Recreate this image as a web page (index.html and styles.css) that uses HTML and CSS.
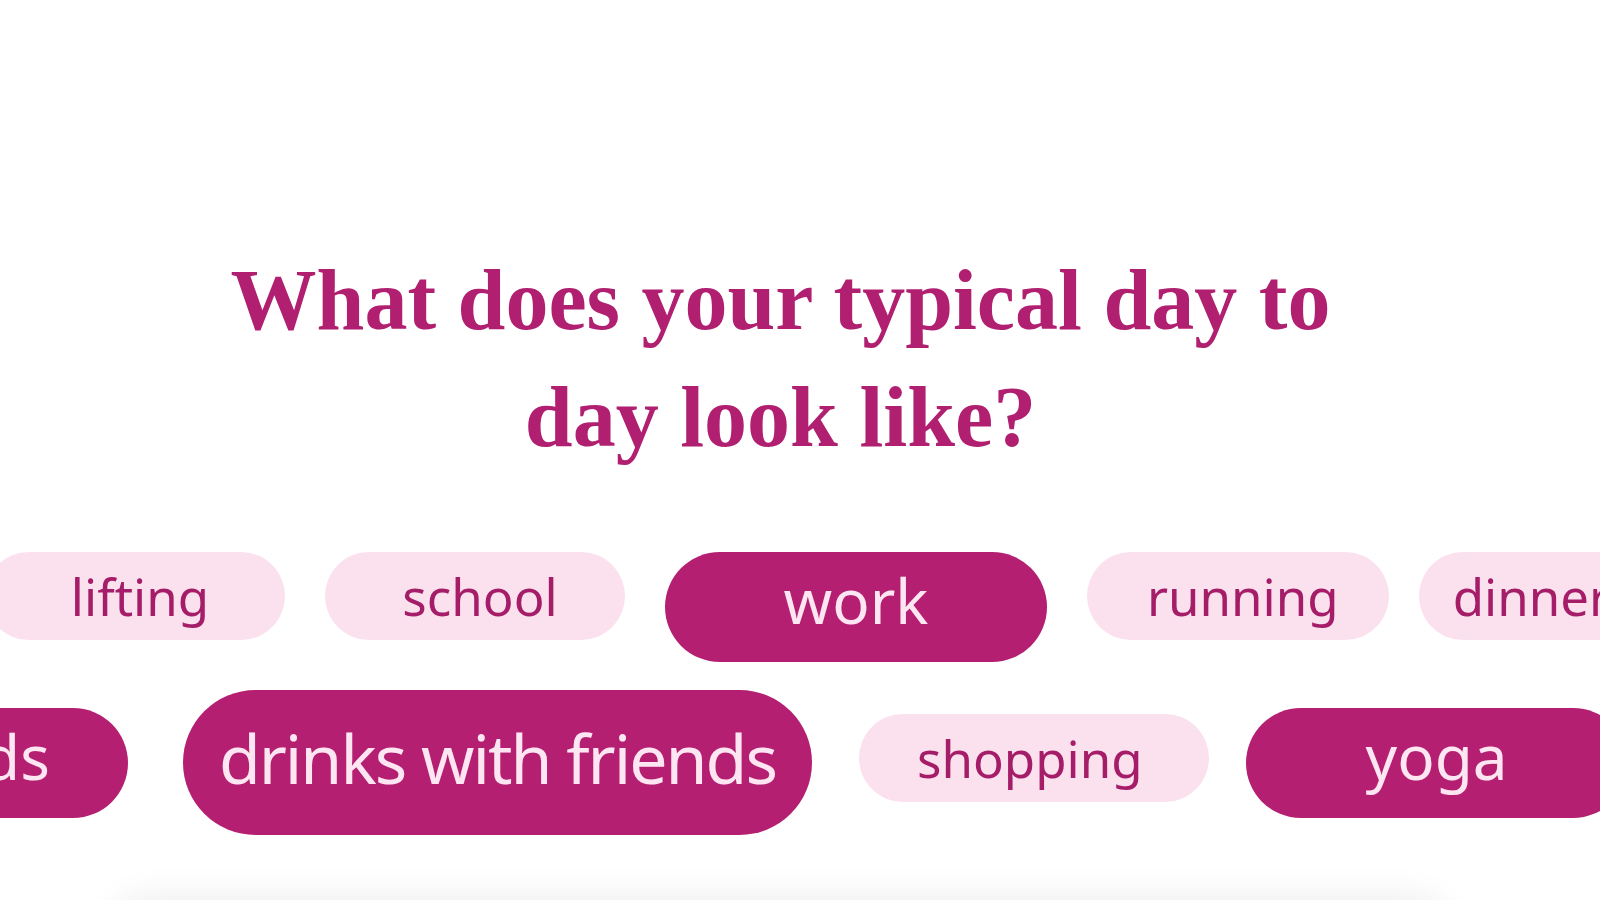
FILE: index.html
```html
<!DOCTYPE html>
<html lang="en">
<head>
<meta charset="utf-8">
<title>Your typical day</title>
<link rel="stylesheet" href="styles.css">
</head>
<body>
<main class="page">
  <section class="hero">
    <h1 class="title">What does your typical day to<br>day look like?</h1>
    <div class="tags">
      <div class="tag-row tag-row--top">
        <span class="tag">lifting</span>
        <span class="tag">school</span>
        <span class="tag tag--active">work</span>
        <span class="tag">running</span>
        <span class="tag tag--near tag--tight">dinner dates</span>
      </div>
      <div class="tag-row tag-row--bottom">
        <span class="tag tag--active">time with kids</span>
        <span class="tag tag--active tag--focus">drinks with friends</span>
        <span class="tag tag--raised">shopping</span>
        <span class="tag tag--active tag--near">yoga</span>
      </div>
    </div>
  </section>
  <section class="card"></section>
</main>
</body>
</html>
```
FILE: styles.css
```css
* { box-sizing: border-box; }

html, body {
  margin: 0;
  height: 100%;
  overflow: hidden;
  background: #ffffff;
}

body {
  font-family: "Noto Sans", "Open Sans", sans-serif;
}

.page {
  display: flex;
  flex-direction: column;
}

.hero {
  padding-top: 242px;
  display: flex;
  flex-direction: column;
}

.title {
  margin: 0;
  padding-right: 39px;
  text-align: center;
  font-family: "Liberation Serif", "Times New Roman", serif;
  font-weight: 700;
  font-size: 86px;
  line-height: 117px;
  color: #b11f70;
}

.tags {
  margin-top: 76px;
  display: flex;
  flex-direction: column;
  gap: 28px;
}

.tag-row {
  display: flex;
  flex-wrap: nowrap;
  white-space: nowrap;
}

.tag-row--top {
  align-items: flex-start;
  gap: 40px;
  margin-left: -15px;
}

.tag-row--bottom {
  align-items: center;
  gap: 47px;
  margin-left: -434px;
}

.tag {
  flex: none;
  display: inline-flex;
  justify-content: center;
  align-items: center;
  min-width: 300px;
  padding: 10px 50px 10px 60px;
  border-radius: 999px;
  background: #fbe1ed;
  color: #a51d69;
  font-size: 51px;
  line-height: 68px;
}

.tag--active {
  min-width: 382px;
  padding: 6px 78px 20px;
  background: #b51f71;
  color: #fde5f1;
  font-size: 62px;
  line-height: 84px;
}

.tag--focus {
  margin-left: 8px;
  padding: 24px 36px 34px;
  font-size: 68px;
  letter-spacing: -2px;
  line-height: 87px;
}

.tag--raised {
  margin-bottom: 10px;
  padding-left: 58px;
  padding-right: 66px;
}

.tag--near {
  margin-left: -10px;
}

.tag--tight {
  padding-left: 34px;
}

.card {
  margin: 70px auto 0;
  width: 1320px;
  height: 300px;
  transform: translateX(-20px);
  background: #ffffff;
  border-radius: 24px;
  box-shadow: 0 0 40px rgba(30, 30, 60, 0.12);
}
```
